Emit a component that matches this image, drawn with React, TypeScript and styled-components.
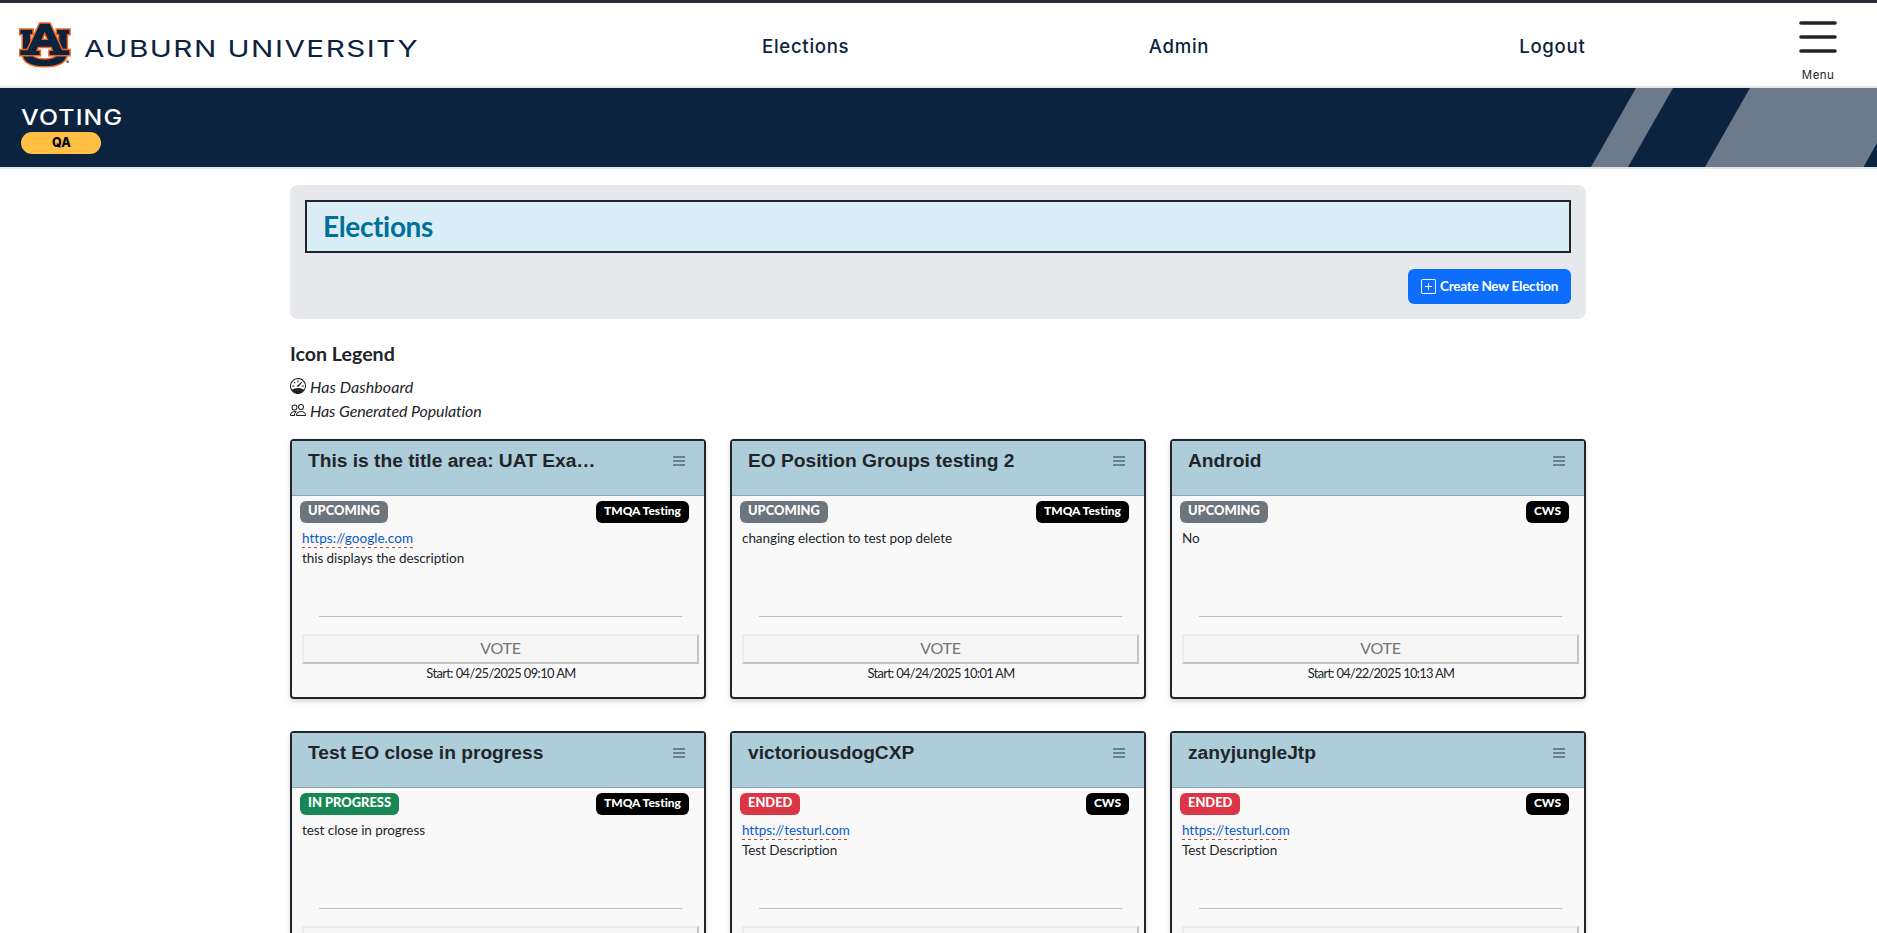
import React from "react";
import styled, { createGlobalStyle } from "styled-components";
import { BsSpeedometer, BsPeople, BsPlusSquare } from "react-icons/bs";

const GlobalStyle = createGlobalStyle`
  *, *::before, *::after { box-sizing: border-box; }
  body {
    margin: 0;
    background: #fff;
    color: #212529;
    font-family: Lato, "Open Sans", sans-serif;
    font-variant-ligatures: none;
    overflow: hidden;
  }
  h1, h2, h3, p { margin: 0; }
`;

const Page = styled.div`
  height: 933px;
  overflow: hidden;
`;

const Header = styled.header`
  display: flex;
  height: 88px;
  border-top: 3px solid #2f2a33;
  border-bottom: 2px solid #e6e6e6;
`;

const Brand = styled.a`
  display: flex;
  align-items: flex-start;
  width: 619px;
  padding: 19px 0 0 19px;
`;

const Emblem = styled.svg`
  width: 52px;
  height: 46px;
`;

const Wordmark = styled.svg`
  width: 336px;
  height: 30px;
  margin: 12px 0 0 13px;
  fill: #0c2340;
  font-family: Inter, sans-serif;
  font-weight: 400;
`;

const Nav = styled.nav`
  display: flex;
  width: 1120px;
`;

const NavLink = styled.a`
  flex: 1;
  padding-top: 32px;
  text-align: center;
  color: #0c2340;
  font: 500 18.6px/22px Inter, sans-serif;
  letter-spacing: 0.7px;
`;

const MenuButton = styled.button`
  display: flex;
  flex-direction: column;
  align-items: center;
  width: 38px;
  margin-left: 60px;
  padding: 18px 0 0;
  border: 0;
  background: none;
  color: #212529;
  font: 400 11.5px/14px Inter, sans-serif;
  letter-spacing: 0.4px;

  svg { display: block; margin-bottom: 15px; }
`;

const Band = styled.section`
  display: flex;
  justify-content: space-between;
  height: 81px;
  border-bottom: 2px solid #e6e6e6;
  background: #0c2340;
`;

const BandLabel = styled.div`
  padding: 16px 0 0 21px;
`;

const AppName = styled.h2`
  height: 28px;
  color: #fff;
  font: 500 21.5px/26px Inter, sans-serif;
  letter-spacing: 1px;
  transform: scaleX(1.155);
  transform-origin: left;
`;

const EnvPill = styled.span`
  display: block;
  width: 80px;
  padding-left: 1px;
  border-radius: 11px;
  background: #ffc044;
  color: #000;
  text-align: center;
  font: 800 12.5px/22px Inter, sans-serif;
`;

const Main = styled.main`
  width: 1296px;
  margin: 16px 0 0 290px;
`;

const TitlePanel = styled.section`
  display: flex;
  flex-direction: column;
  align-items: flex-end;
  gap: 16px;
  height: 134px;
  padding: 15px;
  border-radius: 8px;
  background: #e7e8ec;
`;

const PageTitle = styled.h1`
  width: 100%;
  height: 53px;
  padding-left: 16px;
  border: 2px solid #212529;
  background: #d9edf6;
  color: #00709b;
  font-size: 28px;
  font-weight: 700;
  line-height: 49px;
  letter-spacing: -0.35px;
`;

const CreateButton = styled.button`
  display: flex;
  align-items: center;
  gap: 4px;
  width: 163px;
  height: 35px;
  padding: 0 0 1px 13px;
  border: 0;
  border-radius: 6px;
  background: #0d6efd;
  color: #fff;
  font: 700 13.5px/20px Lato, sans-serif;
  letter-spacing: -0.25px;
  white-space: nowrap;
`;

const Legend = styled.section`
  padding-top: 23px;
`;

const LegendTitle = styled.h2`
  height: 32px;
  font-size: 19.6px;
  font-weight: 700;
  line-height: 24px;
`;

const LegendItem = styled.p<{ $tracking: number }>`
  display: flex;
  align-items: center;
  gap: 4px;
  height: 24px;
  font-size: 16px;
  font-style: italic;
  letter-spacing: ${(p) => p.$tracking}px;
`;

const Grid = styled.section`
  display: grid;
  grid-template-columns: repeat(3, 416px);
  gap: 32px 24px;
  margin-top: 17px;
`;

const Card = styled.article`
  height: 260px;
  border: 2px solid #212529;
  border-radius: 4px;
  background: #f9f9f9;
  box-shadow: 0 2px 4px rgba(0, 0, 0, 0.12), 0 4px 8px rgba(0, 0, 0, 0.05);
`;

const CardHeader = styled.header`
  display: flex;
  justify-content: space-between;
  height: 55px;
  padding: 8px 19px 0 16px;
  border-bottom: 1px solid #8ca5af;
  background: #aecdda;
  color: #6b818c;
`;

const CardTitle = styled.h3`
  color: #212529;
  font: 700 19.2px/24px "Liberation Sans", Arial, sans-serif;
`;

const CardMenu = styled.svg`
  width: 12px;
  height: 10px;
  margin-top: 7px;
`;

const BadgeRow = styled.div`
  display: flex;
  justify-content: space-between;
  padding: 5px 15px 0 8px;
`;

const Badge = styled.span<{ $color: string; $small?: boolean }>`
  height: 22px;
  padding: 0 8px;
  border-radius: 6px;
  background: ${(p) => p.$color};
  color: #fff;
  font-size: ${(p) => (p.$small ? 12 : 12.9)}px;
  font-weight: 900;
  line-height: 19px;
`;

const Description = styled.div`
  height: 90px;
  padding: 5px 0 0 10px;
  font-size: 13.5px;
  line-height: 20px;
  letter-spacing: -0.06px;
`;

const Link = styled.a<{ $tracking: number }>`
  display: block;
  width: max-content;
  height: 20px;
  background: repeating-linear-gradient(90deg, #c9471c 0 3px, transparent 3px 6px) bottom / 100% 1px no-repeat;
  color: #0a58ca;
  letter-spacing: ${(p) => p.$tracking}px;
`;

const Divider = styled.hr`
  height: 1px;
  margin: 3px 22px 17px 27px;
  border: 0;
  background: #c0c0c0;
`;

const VoteButton = styled.button`
  display: block;
  width: 397px;
  height: 30px;
  margin-left: 10px;
  padding: 0 0 3px;
  border: 2px solid;
  border-color: #ececec #c4c4c4 #c4c4c4 #ececec;
  background: #f6f6f6;
  color: #737373;
  font: 400 16px/23px Lato, sans-serif;
  letter-spacing: -0.3px;
`;

const StartTime = styled.p<{ $tracking: number }>`
  padding-left: 6px;
  text-align: center;
  font-size: 12.9px;
  line-height: 19px;
  letter-spacing: ${(p) => p.$tracking}px;
`;

type Status = "UPCOMING" | "IN PROGRESS" | "ENDED";

interface Election {
  title: string;
  status: Status;
  org: string;
  link?: string;
  linkTracking?: number;
  text: string;
  start?: string;
  startTracking?: number;
}

const statusColors: Record<Status, string> = {
  UPCOMING: "#6c757d",
  "IN PROGRESS": "#198754",
  ENDED: "#dc3545",
};

const elections: Election[] = [
  { title: "This is the title area: UAT Exa…", status: "UPCOMING", org: "TMQA Testing", link: "https://google.com", linkTracking: 0.04, text: "this displays the description", start: "04/25/2025 09:10 AM", startTracking: -0.6 },
  { title: "EO Position Groups testing 2", status: "UPCOMING", org: "TMQA Testing", text: "changing election to test pop delete", start: "04/24/2025 10:01 AM", startTracking: -0.7 },
  { title: "Android", status: "UPCOMING", org: "CWS", text: "No", start: "04/22/2025 10:13 AM", startTracking: -0.72 },
  { title: "Test EO close in progress", status: "IN PROGRESS", org: "TMQA Testing", text: "test close in progress" },
  { title: "victoriousdogCXP", status: "ENDED", org: "CWS", link: "https://testurl.com", linkTracking: -0.09, text: "Test Description" },
  { title: "zanyjungleJtp", status: "ENDED", org: "CWS", link: "https://testurl.com", linkTracking: -0.09, text: "Test Description" },
];

function AuburnEmblem() {
  return (
    <Emblem viewBox="57 65 156 138">
      <g fill="#0c2340" stroke="#f26522" strokeWidth="9" paintOrder="stroke" fillRule="evenodd">
        <path d="M61 88H97V101H90V150Q92 178 134 178Q176 178 178 150V101H171V88H208V101H200V160Q198 197 134 197Q70 197 69 160V101H61Z" />
        <path d="M120 70H149L186 150H208V164H149V152H160L155 139H113L108 152H119V164H61V150H83ZM134 94L124 119H145Z" />
      </g>
      <circle cx="203" cy="184" r="4" fill="#5c6b80" />
    </Emblem>
  );
}

function BandStripes() {
  return (
    <svg width="290" height="79" viewBox="0 0 290 79" fill="#6d7a8b">
      <path d="M49 0H86L41 79H4Z" />
      <path d="M163 0H290V55L276.500 79H118Z" />
    </svg>
  );
}

function ElectionCard({ election }: { election: Election }) {
  return (
    <Card>
      <CardHeader>
        <CardTitle>{election.title}</CardTitle>
        <CardMenu viewBox="0 0 12 10" fill="currentColor">
          <path d="M0 0h12v2H0zM0 4h12v2H0zM0 8h12v2H0z" />
        </CardMenu>
      </CardHeader>
      <BadgeRow>
        <Badge $color={statusColors[election.status]}>{election.status}</Badge>
        <Badge $color="#000" $small>{election.org}</Badge>
      </BadgeRow>
      <Description>
        {election.link && <Link $tracking={election.linkTracking ?? 0}>{election.link}</Link>}
        <p>{election.text}</p>
      </Description>
      <Divider />
      <VoteButton disabled>{election.start && "VOTE"}</VoteButton>
      {election.start && (
        <StartTime $tracking={election.startTracking ?? 0}>Start: {election.start}</StartTime>
      )}
    </Card>
  );
}

export default function App() {
  return (
    <Page>
      <GlobalStyle />
      <Header>
        <Brand>
          <AuburnEmblem />
          <Wordmark viewBox="0 0 336 30">
            <text x="0" y="23" fontSize="23.4" textLength="335" lengthAdjust="spacingAndGlyphs" letterSpacing="1.2">
              AUBURN UNIVERSITY
            </text>
          </Wordmark>
        </Brand>
        <Nav>
          <NavLink>Elections</NavLink>
          <NavLink>Admin</NavLink>
          <NavLink>Logout</NavLink>
        </Nav>
        <MenuButton>
          <svg width="38" height="32" viewBox="0 0 38 32" stroke="#212529" strokeWidth="3.600" strokeLinecap="round">
            <path d="M2 2H36M2 16H36M2 30H36" />
          </svg>
          Menu
        </MenuButton>
      </Header>
      <Band>
        <BandLabel>
          <AppName>VOTING</AppName>
          <EnvPill>QA</EnvPill>
        </BandLabel>
        <BandStripes />
      </Band>
      <Main>
        <TitlePanel>
          <PageTitle>Elections</PageTitle>
          <CreateButton>
            <BsPlusSquare size={15} />
            Create New Election
          </CreateButton>
        </TitlePanel>
        <Legend>
          <LegendTitle>Icon Legend</LegendTitle>
          <LegendItem $tracking={0.08}>
            <BsSpeedometer size={16} />
            Has Dashboard
          </LegendItem>
          <LegendItem $tracking={-0.11}>
            <BsPeople size={16} />
            Has Generated Population
          </LegendItem>
        </Legend>
        <Grid>
          {elections.map((election) => (
            <ElectionCard key={election.title} election={election} />
          ))}
        </Grid>
      </Main>
    </Page>
  );
}
